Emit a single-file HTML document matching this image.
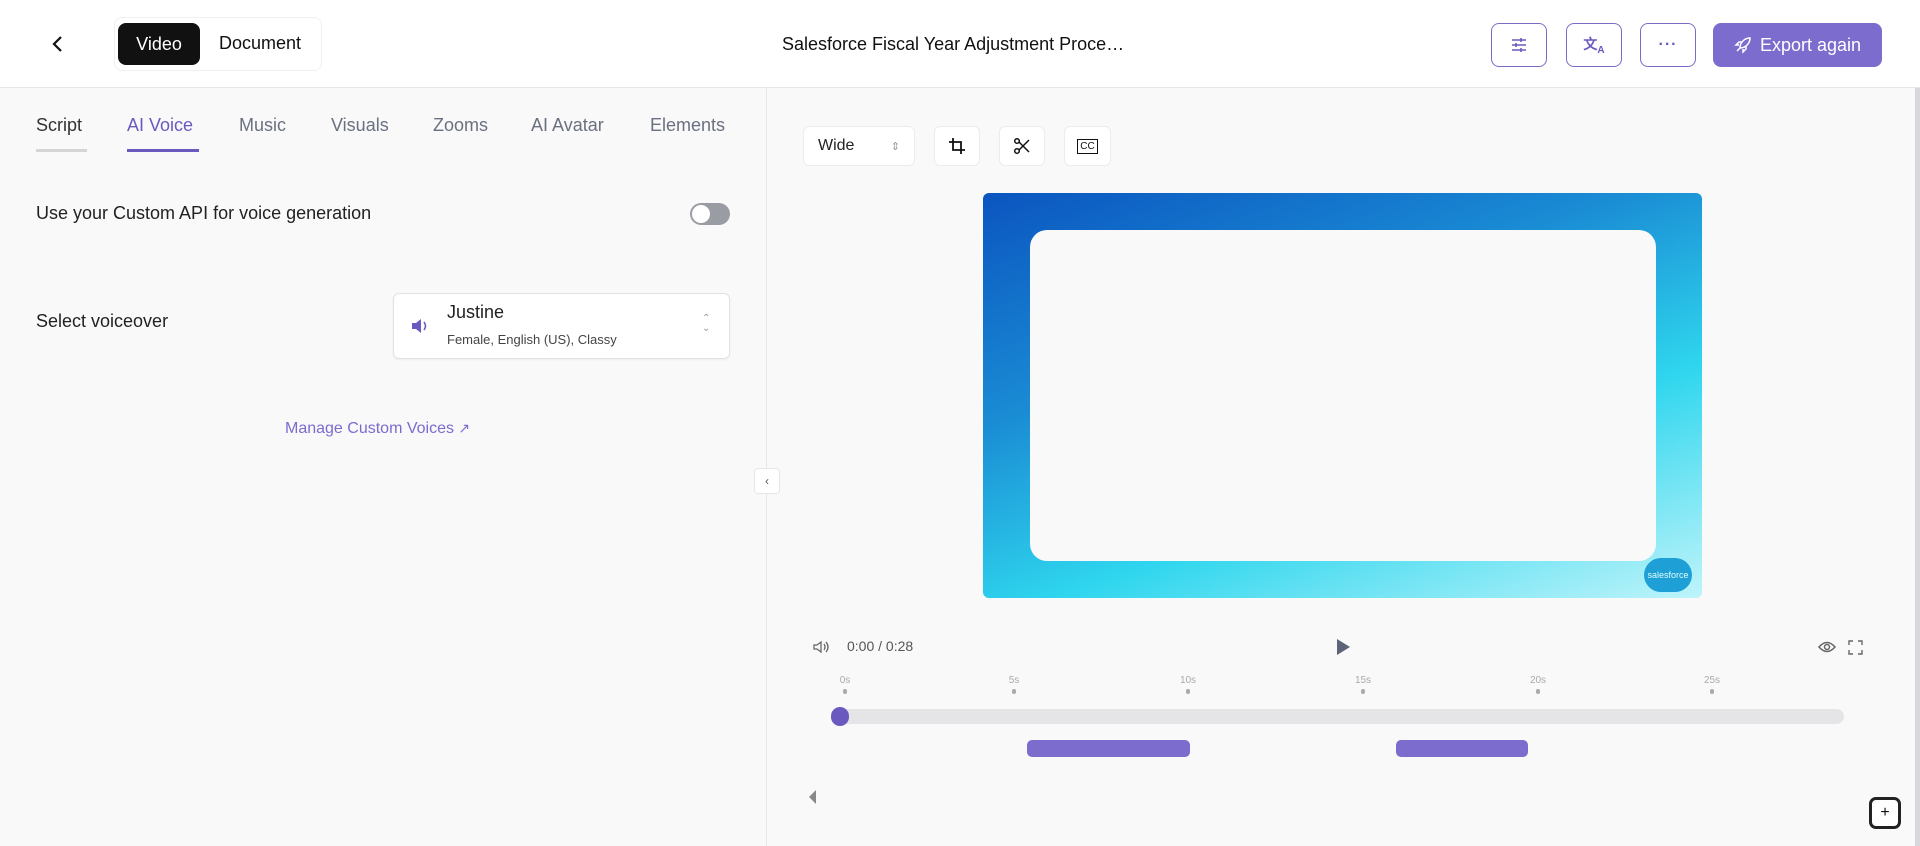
<!DOCTYPE html>
<html><head><meta charset="utf-8"><style>
*{box-sizing:border-box;margin:0;padding:0}
body{width:1920px;height:846px;overflow:hidden;background:#f9f9fa;font-family:"Liberation Sans",sans-serif;position:relative;color:#111}
.abs{position:absolute}
.hdr{left:0;top:0;width:1920px;height:88px;background:#fff;border-bottom:1px solid #e6e6e9}
.ib{border:1.5px solid #7b6cc8;border-radius:8px;background:#fff;width:56px;height:44px;top:23px;display:flex;align-items:center;justify-content:center}
.tab{top:115px;font-size:18px;color:#6b7080}
.tb{background:#fff;border:1px solid #ececef;border-radius:6px;height:40px;top:126px;display:flex;align-items:center;justify-content:center}
.tick{top:675px;font-size:10px;color:#aaa;width:30px;text-align:center}
.dot{top:689px;width:4px;height:5px;background:#aaa;border-radius:2px}
</style></head><body>
<div class="abs hdr"></div>
<svg class="abs" style="left:50px;top:34px" width="16" height="20" viewBox="0 0 16 20"><path d="M11 3L4 10l7 7" stroke="#111" stroke-width="2.2" fill="none"/></svg>
<div class="abs" style="left:114px;top:17px;width:208px;height:54px;border:1px solid #f0f0f2;border-radius:8px;background:#fff"></div>
<div class="abs" style="left:118px;top:23px;width:82px;height:42px;background:#111;border-radius:8px;color:#fff;font-size:18px;display:flex;align-items:center;justify-content:center">Video</div>
<div class="abs" style="left:219px;top:33px;font-size:18px">Document</div>
<div class="abs" style="left:782px;top:34px;font-size:18px">Salesforce Fiscal Year Adjustment Proce…</div>
<div class="abs ib" style="left:1491px"><svg width="18" height="18" viewBox="0 0 18 18" stroke="#6a5ac0" stroke-width="1.6"><path d="M2 4h14M2 9h14M2 14h14"/><path d="M11 2v4M6 7v4M11 12v4"/></svg></div>
<div class="abs ib" style="left:1566px"><span style="color:#6a5ac0;font-size:14px;font-weight:bold">文<sub style="font-size:10px">A</sub></span></div>
<div class="abs ib" style="left:1640px"><span style="color:#6a5ac0;font-size:16px;font-weight:bold;letter-spacing:1px">···</span></div>
<div class="abs" style="left:1713px;top:23px;width:169px;height:44px;border-radius:8px;background:#7b6cce;color:#fff;font-size:18px;display:flex;align-items:center;justify-content:center;gap:8px"><svg width="18" height="18" viewBox="0 0 18 18" fill="none" stroke="#fff" stroke-width="1.5"><path d="M6 12c0-6 5-10 10-10 0 5-4 10-10 10zM6 12l-3 3M5 9l-3 0 3-3h3M9 13v3l3-3v-3"/></svg>Export again</div>
<div class="abs" style="left:1915px;top:88px;width:5px;height:758px;background:#d8d8dc"></div>
<!-- left panel -->
<div class="abs" style="left:766px;top:88px;width:1px;height:758px;background:#e6e6e9"></div>
<div class="abs tab" style="left:36px;color:#333">Script</div>
<div class="abs" style="left:36px;top:149px;width:51px;height:3px;background:#d5d5d8"></div>
<div class="abs tab" style="left:127px;color:#6a5ac0">AI Voice</div>
<div class="abs" style="left:127px;top:149px;width:72px;height:3px;background:#6a5ac0"></div>
<div class="abs tab" style="left:239px">Music</div>
<div class="abs tab" style="left:331px">Visuals</div>
<div class="abs tab" style="left:433px">Zooms</div>
<div class="abs tab" style="left:531px">AI Avatar</div>
<div class="abs tab" style="left:650px">Elements</div>
<div class="abs" style="left:36px;top:203px;font-size:18px;color:#222">Use your Custom API for voice generation</div>
<div class="abs" style="left:690px;top:203px;width:40px;height:22px;border-radius:11px;background:#9a9ca4"><div style="position:absolute;left:2px;top:2px;width:18px;height:18px;border-radius:9px;background:#fff"></div></div>
<div class="abs" style="left:36px;top:311px;font-size:18px;color:#222">Select voiceover</div>
<div class="abs" style="left:393px;top:293px;width:337px;height:66px;background:#fff;border:1px solid #e2e2e6;border-radius:6px;box-shadow:0 1px 2px rgba(0,0,0,.05)"></div>
<svg class="abs" style="left:410px;top:317px" width="20" height="18" viewBox="0 0 20 18"><path d="M2 6h4l5-4v14l-5-4H2z" fill="#6a5ac0"/><path d="M14 5q3 4 0 8" stroke="#6a5ac0" stroke-width="1.6" fill="none"/></svg>
<div class="abs" style="left:447px;top:302px;font-size:18px;color:#222">Justine</div>
<div class="abs" style="left:447px;top:332px;font-size:13px;color:#444">Female, English (US), Classy</div>
<div class="abs" style="left:702px;top:314px;font-size:10px;color:#999;line-height:10px">⌃<br>⌄</div>
<div class="abs" style="left:285px;top:420px;font-size:16px;color:#7b6cce">Manage Custom Voices <span style="font-size:14px">↗</span></div>
<div class="abs" style="left:754px;top:468px;width:26px;height:26px;background:#fff;border:1px solid #e6e6e9;border-radius:4px;font-size:12px;color:#555;display:flex;align-items:center;justify-content:center">‹</div>
<!-- right panel -->
<div class="abs tb" style="left:803px;width:112px;justify-content:space-between;padding:0 14px;font-size:16px;color:#222">Wide<span style="font-size:11px;color:#999">⇕</span></div>
<div class="abs tb" style="left:934px;width:46px"><svg width="18" height="18" viewBox="0 0 18 18" fill="none" stroke="#111" stroke-width="1.8"><path d="M5 1v12h12M1 5h12v12"/></svg></div>
<div class="abs tb" style="left:999px;width:46px"><svg width="18" height="18" viewBox="0 0 18 18" fill="none" stroke="#111" stroke-width="1.5"><circle cx="4" cy="4" r="2.3"/><circle cx="4" cy="14" r="2.3"/><path d="M6 5l10 10M6 13L16 3"/></svg></div>
<div class="abs tb" style="left:1064px;width:47px"><div style="border:1.5px solid #111;font-size:10px;padding:0 2px;line-height:13px">CC</div></div>
<div class="abs" style="left:983px;top:193px;width:719px;height:405px;border-radius:6px;background:linear-gradient(160deg,#0b55c0 0%,#1a8cd4 35%,#2fd6ee 65%,#bff4fa 100%)"></div>
<div class="abs" style="left:1030px;top:230px;width:626px;height:331px;border-radius:17px;background:#f9f9fa"></div>
<div class="abs" style="left:1644px;top:558px;width:48px;height:34px;border-radius:17px;background:#1e9fd6;color:#dff;font-size:9px;display:flex;align-items:center;justify-content:center">salesforce</div>
<svg class="abs" style="left:812px;top:638px" width="18" height="18" viewBox="0 0 18 18" fill="none" stroke="#666" stroke-width="1.3"><path d="M2 7h3l4-3v10l-4-3H2z"/><path d="M12 6q2 3 0 6M14 4q4 5 0 10"/></svg>
<div class="abs" style="left:847px;top:638px;font-size:14px;color:#555">0:00 / 0:28</div>
<svg class="abs" style="left:1335px;top:638px" width="16" height="18"><path d="M2 1l13 8-13 8z" fill="#5e6478"/></svg>
<svg class="abs" style="left:1818px;top:638px" width="18" height="18" fill="none" stroke="#666" stroke-width="1.5"><path d="M1 9q8-9 16 0q-8 9-16 0z"/><circle cx="9" cy="9" r="2.5"/></svg>
<svg class="abs" style="left:1848px;top:640px" width="15" height="15" fill="none" stroke="#666" stroke-width="1.4"><path d="M1 5V1h4M10 1h4v4M14 10v4h-4M5 14H1v-4"/></svg>
<div class="abs tick" style="left:830px">0s</div><div class="abs dot" style="left:843px"></div>
<div class="abs tick" style="left:999px">5s</div><div class="abs dot" style="left:1012px"></div>
<div class="abs tick" style="left:1173px">10s</div><div class="abs dot" style="left:1186px"></div>
<div class="abs tick" style="left:1348px">15s</div><div class="abs dot" style="left:1361px"></div>
<div class="abs tick" style="left:1523px">20s</div><div class="abs dot" style="left:1536px"></div>
<div class="abs tick" style="left:1697px">25s</div><div class="abs dot" style="left:1710px"></div>
<div class="abs" style="left:833px;top:709px;width:1011px;height:15px;border-radius:8px;background:#e5e5e8"></div>
<div class="abs" style="left:831px;top:707px;width:18px;height:19px;border-radius:9px;background:#6a5ac0"></div>
<div class="abs" style="left:1027px;top:740px;width:163px;height:17px;border-radius:5px;background:#7b6cce"></div>
<div class="abs" style="left:1396px;top:740px;width:132px;height:17px;border-radius:5px;background:#7b6cce"></div>
<svg class="abs" style="left:808px;top:789px" width="10" height="16"><path d="M8 1L1 8l7 7z" fill="#888"/></svg>
<div class="abs" style="left:1869px;top:797px;width:32px;height:32px;border:3px solid #222;border-radius:7px;background:#fff;font-size:16px;display:flex;align-items:center;justify-content:center">+</div>
</body></html>
